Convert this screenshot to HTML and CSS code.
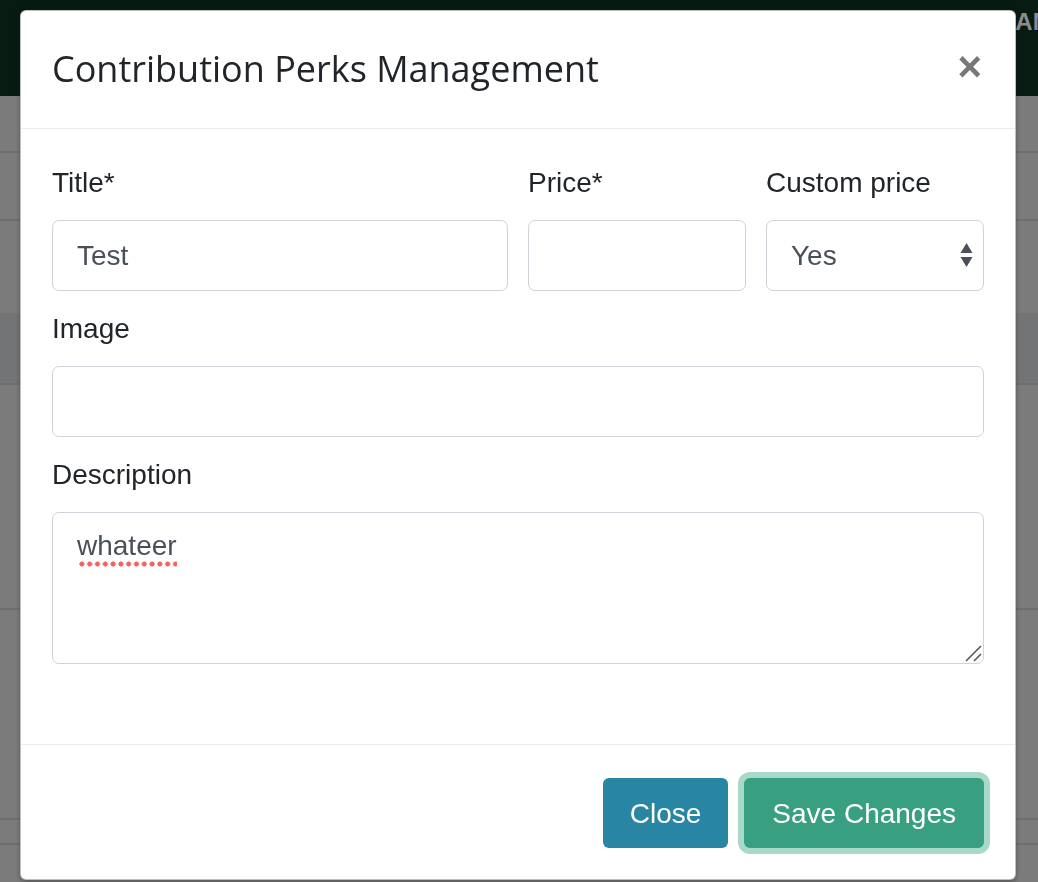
FILE: index.html
```html
<!DOCTYPE html>
<html lang="en">
<head>
    <meta charset="UTF-8">
    <title>Contribution Perks Management</title>
    <link rel="stylesheet" href="styles.css">
</head>
<body>
<div class="page">
    <div class="topbar">
        <span class="nav-text">CAMPAIGNS</span>
    </div>
    <div class="rows">
        <div class="row row-1"></div>
        <div class="row row-2"></div>
        <div class="row row-3"></div>
        <div class="row row-head"></div>
        <div class="row row-4"></div>
        <div class="row row-5"></div>
        <div class="row row-6"></div>
        <div class="row row-7"></div>
    </div>
</div>

<div class="modal">
    <div class="modal-content">
        <div class="modal-header">
            <h5 class="modal-title">Contribution Perks Management</h5>
            <button class="close" type="button">&times;</button>
        </div>
        <div class="modal-body">
            <div class="form-row">
                <div class="form-group col-wide">
                    <label>Title*</label>
                    <input class="form-control" type="text" value="Test">
                </div>
                <div class="form-group">
                    <label>Price*</label>
                    <input class="form-control" type="text" value="">
                </div>
                <div class="form-group">
                    <label>Custom price</label>
                    <div class="form-control custom-select">
                        <span>Yes</span>
                        <svg class="select-arrows" width="13" height="25" viewBox="0 0 13 25">
                            <path d="M6.5 0 L12.5 10 L0.5 10 Z" fill="#495057"/>
                            <path d="M0.5 14 L12.5 14 L6.5 24 Z" fill="#495057"/>
                        </svg>
                    </div>
                </div>
            </div>
            <div class="form-group">
                <label>Image</label>
                <input class="form-control" type="text" value="">
            </div>
            <div class="form-group">
                <label>Description</label>
                <div class="form-control textarea">
                    <span class="misspelled">whateer</span>
                    <svg class="grip" width="17" height="17" viewBox="0 0 17 17">
                        <path d="M1 16 L16 1" stroke="#555" stroke-width="1.6"/>
                        <path d="M9 16 L16 9" stroke="#555" stroke-width="1.6"/>
                    </svg>
                </div>
            </div>
        </div>
        <div class="modal-footer">
            <button class="btn btn-info" type="button">Close</button>
            <button class="btn btn-success focus" type="button">Save Changes</button>
        </div>
    </div>
</div>
</body>
</html>
```

FILE: styles.css
```css
* {
    margin: 0;
    padding: 0;
    box-sizing: border-box;
}

body {
    width: 1038px;
    height: 882px;
    overflow: hidden;
    background: #7b7b7b;
    font-family: "Liberation Sans", Arial, sans-serif;
}

/* page behind the backdrop */
.topbar {
    height: 96px;
    background: #081b12;
    padding: 10px 0 0 998px;
    white-space: nowrap;
    overflow: hidden;
}

.nav-text {
    font-size: 24px;
    line-height: 24px;
    font-weight: 700;
    color: #8c8c8c;
}

.row {
    border-bottom: 2px solid #6c6f71;
}

.row-1 { height: 57px; }
.row-2 { height: 68px; }
.row-3 { height: 92px; border-bottom: 0; }
.row-head { height: 72px; background: #727476; }
.row-4 { height: 225px; }
.row-5 { height: 210px; }
.row-6 { height: 25px; }
.row-7 { height: 60px; border-bottom: 0; }

/* modal */
.modal {
    position: fixed;
    top: 0;
    left: 0;
    right: 0;
    bottom: 0;
    padding: 10px 0 0 20px;
}

.modal-content {
    width: 996px;
    height: 870px;
    background: #fff;
    border: 1px solid rgba(0, 0, 0, .25);
    border-radius: 6px;
    box-shadow: 0 2px 5px rgba(0, 0, 0, .3);
    display: flex;
    flex-direction: column;
}

.modal-header {
    display: flex;
    justify-content: space-between;
    align-items: center;
    padding: 31px 33px 32px 31px;
    border-bottom: 1px solid #e9ecef;
}

.modal-title {
    font-family: "Open Sans", sans-serif;
    font-size: 36px;
    line-height: 54px;
    font-weight: 400;
    color: #212529;
}

.close {
    background: none;
    border: 0;
    font-family: "Liberation Sans", Arial, sans-serif;
    font-size: 42px;
    line-height: 1;
    font-weight: 700;
    color: #777;
    text-shadow: 0 1px 0 #fff;
    margin-top: -4px;
    cursor: pointer;
}

.modal-body {
    flex: 1;
    padding: 33px 31px 0 31px;
}

.form-row {
    display: grid;
    grid-template-columns: repeat(4, 1fr);
    column-gap: 20px;
}

.col-wide {
    grid-column: span 2;
}

.form-group {
    margin-bottom: 17px;
}

label {
    display: block;
    font-size: 28px;
    line-height: 42px;
    color: #212529;
    margin-bottom: 16px;
}

.form-control {
    display: block;
    width: 100%;
    height: 71px;
    padding: 0 24px;
    font-family: "Liberation Sans", Arial, sans-serif;
    font-size: 28px;
    color: #495057;
    background: #fff;
    border: 1px solid #ced4da;
    border-radius: 7px;
    outline: none;
}

.custom-select {
    display: flex;
    align-items: center;
    justify-content: space-between;
    padding-right: 10px;
}

.select-arrows {
    display: block;
}

.textarea {
    height: 152px;
    padding: 12px 1px 1px 24px;
    line-height: 42px;
    display: flex;
    flex-direction: column;
    align-items: flex-start;
}

.misspelled {
    background-image: radial-gradient(circle, #f26464 2.3px, transparent 2.8px);
    background-size: 7.8px 6px;
    background-repeat: repeat-x;
    background-position: 1px 100%;
}

.grip {
    margin-top: auto;
    align-self: flex-end;
}

.modal-footer {
    display: flex;
    justify-content: flex-end;
    gap: 16px;
    padding: 33px 31px 31px;
    border-top: 1px solid #e9ecef;
}

.btn {
    height: 70px;
    padding: 2px 27px 0;
    font-family: "Liberation Sans", Arial, sans-serif;
    font-size: 28px;
    color: #fff;
    border: 0;
    border-radius: 6px;
    cursor: pointer;
}

.btn-info {
    background: #2985a4;
}

.btn-success {
    padding: 2px 28px 0;
    background: #389f80;
}

.btn-success.focus {
    box-shadow: 0 0 0 6px #a8d8c8;
}
```
